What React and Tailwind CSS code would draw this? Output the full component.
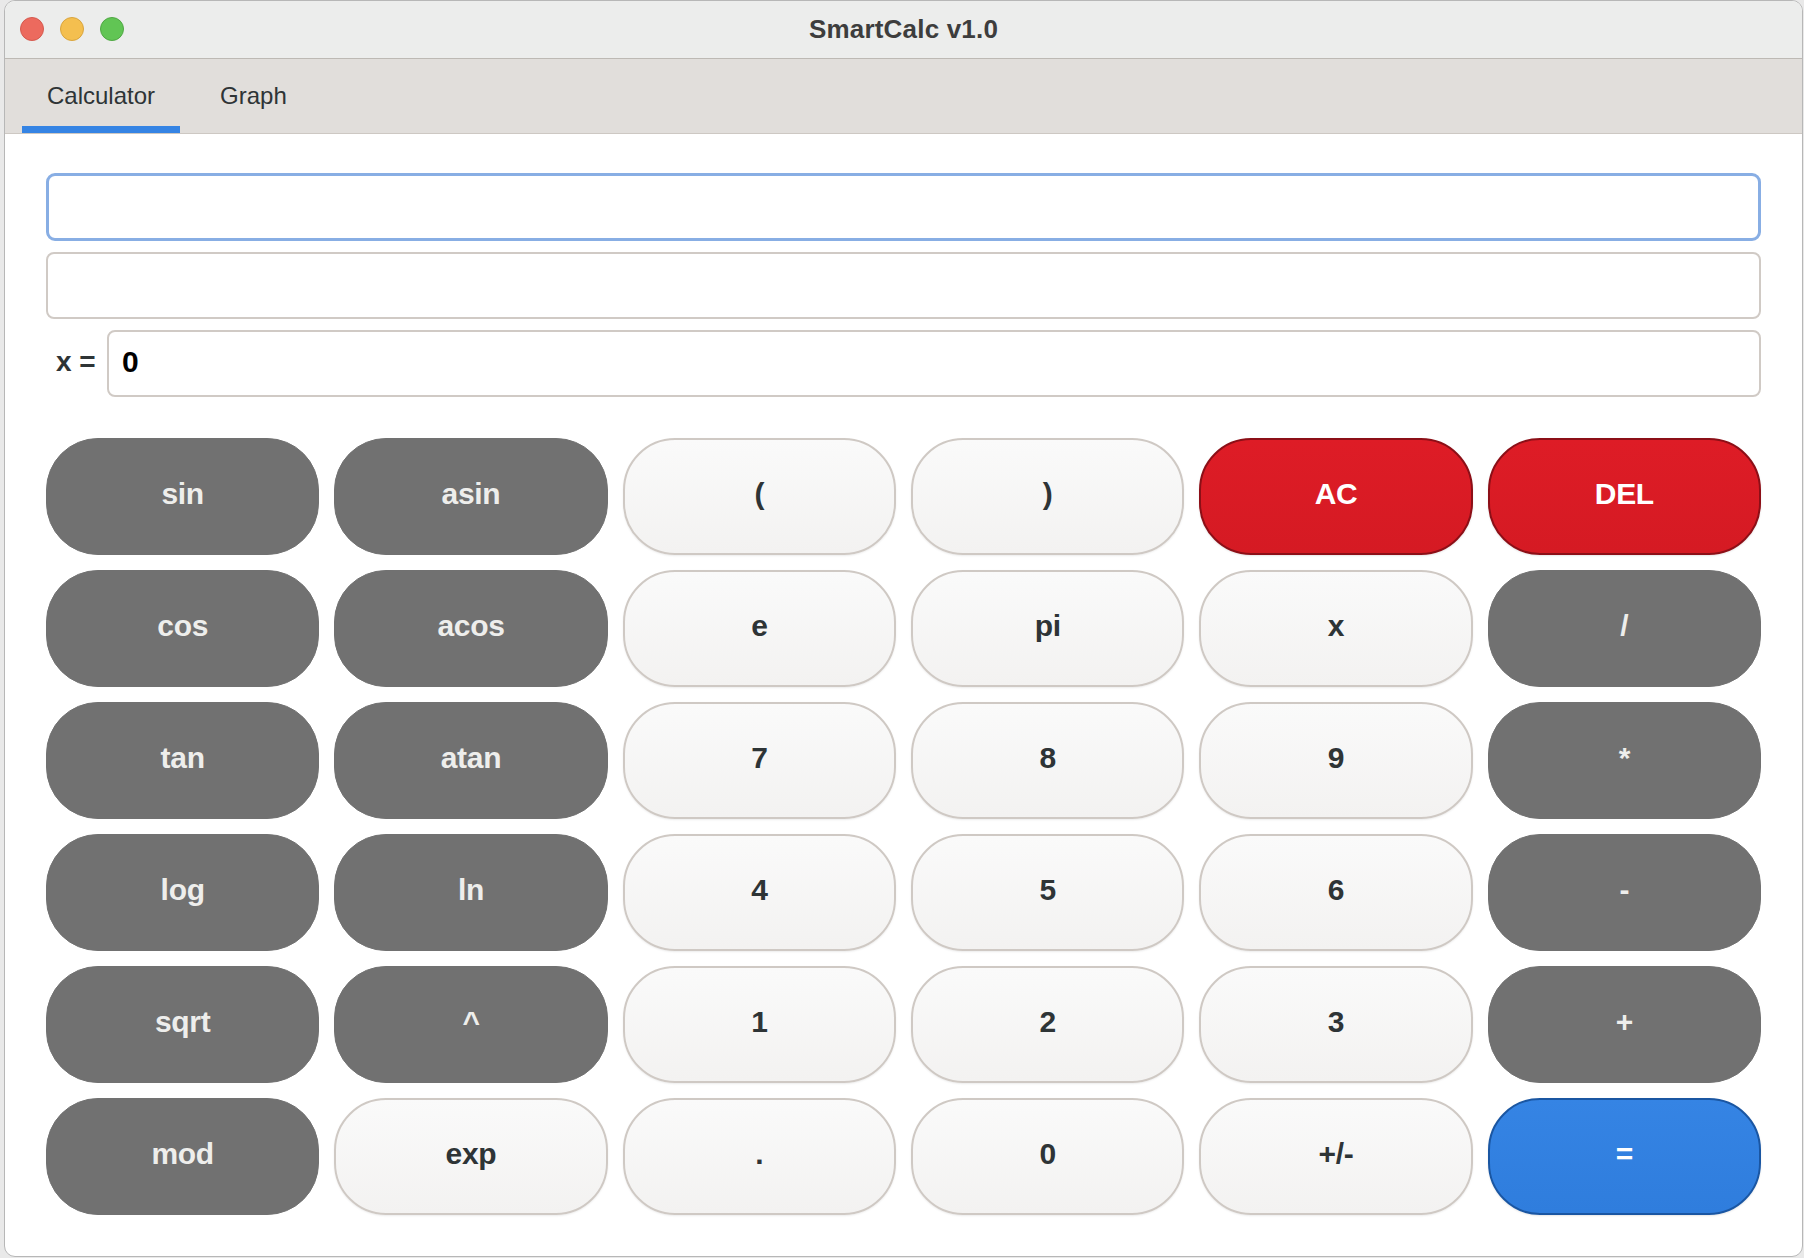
import React from "react";

const rows = [
  [["sin", "g"], ["asin", "g"], ["(", "l"], [")", "l"], ["AC", "r"], ["DEL", "r"]],
  [["cos", "g"], ["acos", "g"], ["e", "l"], ["pi", "l"], ["x", "l"], ["/", "g"]],
  [["tan", "g"], ["atan", "g"], ["7", "l"], ["8", "l"], ["9", "l"], ["*", "g"]],
  [["log", "g"], ["ln", "g"], ["4", "l"], ["5", "l"], ["6", "l"], ["-", "g"]],
  [["sqrt", "g"], ["^", "g"], ["1", "l"], ["2", "l"], ["3", "l"], ["+", "g"]],
  [["mod", "g"], ["exp", "l"], [".", "l"], ["0", "l"], ["+/-", "l"], ["=", "b"]],
];

const styles = {
  g: "bg-[#717171] text-[#eeeeec] border border-[#717171]",
  l: "bg-gradient-to-b from-[#fafafa] to-[#f3f2f1] text-[#2e3436] border-2 border-[#cfc9c4] shadow-[0_1px_2px_rgba(0,0,0,0.08)]",
  r: "bg-gradient-to-b from-[#de1c26] to-[#d51a23] text-white border-2 border-[#8c0f17] shadow-[0_1px_2px_rgba(0,0,0,0.1)]",
  b: "bg-gradient-to-b from-[#3584e4] to-[#2f7ddd] text-white border-2 border-[#1a56a2] shadow-[0_1px_2px_rgba(0,0,0,0.1)]",
};

function Key({ label, kind }) {
  return (
    <button
      className={
        "h-[117px] rounded-[52px] flex items-center justify-center pb-[5px] text-[30px] font-bold leading-none tracking-[-0.3px] " +
        styles[kind]
      }
    >
      {label}
    </button>
  );
}

export default function App() {
  return (
    <div className="w-[1804px] h-[1258px] bg-[#e9e9e9] font-['Liberation_Sans',Arial,Helvetica,sans-serif] overflow-hidden">
      <div className="ml-[4px] w-[1799px] h-[1257px] border border-[#b7b7b7] rounded-[11px] overflow-hidden flex flex-col bg-white">
        {/* Title bar */}
        <div className="h-[58px] shrink-0 bg-[#ecedec] border-b border-[#bdb9b4] relative flex items-center justify-center">
          <div className="absolute left-[15px] top-[16px] flex gap-[16px]">
            <div className="w-[24px] h-[24px] rounded-full bg-[#ec6a5e] border border-[#d55a4f]" />
            <div className="w-[24px] h-[24px] rounded-full bg-[#f4bf4f] border border-[#d9a53e]" />
            <div className="w-[24px] h-[24px] rounded-full bg-[#61c554] border border-[#50a844]" />
          </div>
          <div className="text-[26px] font-bold text-[#3d3d3d] tracking-[0.2px]">SmartCalc v1.0</div>
        </div>
        {/* Tab bar */}
        <div className="h-[75px] shrink-0 bg-[#e1dedb] border-b border-[#cdc8c3] flex pl-[17px]">
          <div className="relative h-full px-[25px] flex items-center">
            <span className="text-[24px] text-[#2e3436]">Calculator</span>
            <div className="absolute left-0 right-0 bottom-0 h-[7px] bg-[#3584e4]" />
          </div>
          <div className="relative h-full ml-[15px] px-[25px] flex items-center">
            <span className="text-[24px] text-[#2e3436]">Graph</span>
          </div>
        </div>
        {/* Content */}
        <div className="flex-1 px-[41px] pt-[39px] flex flex-col">
          <div className="h-[68px] rounded-[9px] border-[3px] border-[#88aee4] bg-white" />
          <div className="h-[67px] mt-[11px] rounded-[8px] border-2 border-[#d0cac5] bg-white" />
          <div className="h-[67px] mt-[11px] flex items-center">
            <span className="text-[28px] font-bold text-[#2e3436] w-[61px] pl-[10px] pb-[4px] whitespace-nowrap">x =</span>
            <div className="flex-1 h-full rounded-[8px] border-2 border-[#d0cac5] bg-white flex items-center pl-[13px] pb-[5px]">
              <span className="text-[30px] font-bold text-black">0</span>
            </div>
          </div>
          <div className="mt-[41px] grid grid-cols-6 gap-x-[15px] gap-y-[15px]">
            {rows.flat().map(([label, kind], i) => (
              <Key key={i} label={label} kind={kind} />
            ))}
          </div>
        </div>
      </div>
    </div>
  );
}
